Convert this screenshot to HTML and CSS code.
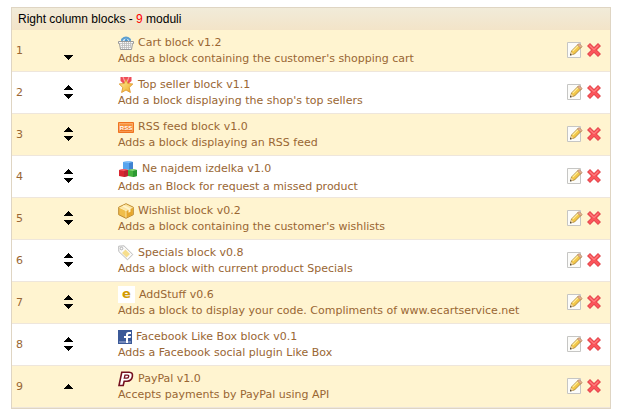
FILE: index.html
```html
<!DOCTYPE html>
<html lang="en">
<head>
<meta charset="utf-8">
<title>Right column blocks</title>
<link rel="stylesheet" href="styles.css">
</head>
<body>
<svg class="defs" width="0" height="0" aria-hidden="true">
  <defs>
    <linearGradient id="gold" x1="0" y1="0" x2="1" y2="1"><stop offset="0" stop-color="#fff0a0"/><stop offset="1" stop-color="#eda820"/></linearGradient>
    <linearGradient id="orange" x1="0" y1="0" x2="0" y2="1"><stop offset="0" stop-color="#f9a04c"/><stop offset="1" stop-color="#ee6c14"/></linearGradient>
    <symbol id="up" viewBox="0 0 9 5"><path d="M4 0h1v1h1v1h1v1h1v1h1v1H0V4h1V3h1V2h1V1h1z"/></symbol>
    <symbol id="down" viewBox="0 0 9 5"><path d="M0 0h9v1H8v1H7v1H6v1H5v1H4V4H3V3H2V2H1V1H0z"/></symbol>
    <symbol id="edit" viewBox="0 0 16 16">
      <path d="M.5 .5h13v15h-13z" fill="#fcfcfa" stroke="#c6c6c4"/>
      <path d="M3.500 13l1-4 7-7 3 3-7 7z" fill="#f3c748" stroke="#a07a2c" stroke-width=".8"/>
      <path d="M5.700 9.200l6-6" stroke="#fff0a0" stroke-width="1.2"/>
      <path d="M10.500 3l1.600-1.600 3 3L13.500 6z" fill="#e6b093" stroke="#a5805c" stroke-width=".6"/>
      <path d="M3.500 13l.8-3.200 2.400 2.400z" fill="#edd2a4"/><path d="M3 13.400l.4-1.800 1.400 1.400z" fill="#333"/>
    </symbol>
    <symbol id="delete" viewBox="0 0 14 14">
      <path d="M3 3l8 8M11 3l-8 8" stroke="#dc3f45" stroke-width="4.2" stroke-linecap="square"/>
      <path d="M3 3l8 8M11 3l-8 8" stroke="#fb555b" stroke-width="2.8" stroke-linecap="square"/>
      <path d="M2.600 2.400l4.400 4.200 4.400-4.200" fill="none" stroke="#ff8e8e" stroke-width="1"/>
    </symbol>
  </defs>
</svg>
<main class="panel">
  <h1 class="panel-title">Right column blocks - <span class="count">9</span> moduli</h1>
  <table class="modules">
    <tbody>
      <tr>
        <td class="position">1</td>
        <td class="order"><div class="arrows arrows-first"><a href="#" aria-label="Move down"><svg width="9" height="5"><use href="#down"/></svg></a></div></td>
        <td class="module">
          <div class="name"><svg width="16" height="16" viewBox="0 0 16 16"><path d="M4 7V4.500Q8 .5 12 4.500V7" fill="#d7e9f6" stroke="#5c9fd0" stroke-width="1.800"/><path d="M6 7l2-4 3 4" fill="#4b95cd"/><path d="M.5 6.500h15v2h-1l-1 6h-11l-1-6h-1z" fill="#f8f8f8" stroke="#999"/><path d="M2 8.500h12M3 10.500h10M3 12.500h10M4.500 7v7M6.500 7v7M8.500 7v7M10.500 7v7M12.500 7v5" stroke="#bbb" stroke-width=".8"/></svg>Cart block v1.2</div>
          <div>Adds a block containing the customer's shopping cart</div>
        </td>
        <td class="actions"><div class="tools"><a href="#" aria-label="Edit"><svg width="16" height="16"><use href="#edit"/></svg></a><a href="#" aria-label="Delete"><svg width="14" height="14"><use href="#delete"/></svg></a></div></td>
      </tr>
      <tr>
        <td class="position">2</td>
        <td class="order"><div class="arrows arrows-pair"><a href="#" aria-label="Move up"><svg width="9" height="5"><use href="#up"/></svg></a><a href="#" aria-label="Move down"><svg width="9" height="5"><use href="#down"/></svg></a></div></td>
        <td class="module">
          <div class="name"><svg width="16" height="16" viewBox="0 0 16 16"><path d="M2.500 0h11v4L10 7H6L2.500 4z" fill="#ee4b57"/><path d="M5 0l2 5M11 0L9 5" stroke="#ffa0a5" stroke-width="1.200"/><path d="M8 2.500l1.800 4 5 .5-3.600 3.500 1.200 5L8 13l-4.400 2.500 1.200-5L1.200 7l5-.5z" fill="url(#gold)" stroke="#df9930" stroke-width=".9"/></svg>Top seller block v1.1</div>
          <div>Add a block displaying the shop's top sellers</div>
        </td>
        <td class="actions"><div class="tools"><a href="#" aria-label="Edit"><svg width="16" height="16"><use href="#edit"/></svg></a><a href="#" aria-label="Delete"><svg width="14" height="14"><use href="#delete"/></svg></a></div></td>
      </tr>
      <tr>
        <td class="position">3</td>
        <td class="order"><div class="arrows arrows-pair"><a href="#" aria-label="Move up"><svg width="9" height="5"><use href="#up"/></svg></a><a href="#" aria-label="Move down"><svg width="9" height="5"><use href="#down"/></svg></a></div></td>
        <td class="module">
          <div class="name"><svg width="16" height="16" viewBox="0 0 16 16"><path d="M.5 3.500h15v10H.5z" fill="url(#orange)" stroke="#ef7320"/><path d="M1.500 4.500h13v8h-13z" fill="none" stroke="#fbb478" stroke-width=".6"/><text class="rss-mark" x="8" y="11" text-anchor="middle">RSS</text></svg>RSS feed block v1.0</div>
          <div>Adds a block displaying an RSS feed</div>
        </td>
        <td class="actions"><div class="tools"><a href="#" aria-label="Edit"><svg width="16" height="16"><use href="#edit"/></svg></a><a href="#" aria-label="Delete"><svg width="14" height="14"><use href="#delete"/></svg></a></div></td>
      </tr>
      <tr>
        <td class="position">4</td>
        <td class="order"><div class="arrows arrows-pair"><a href="#" aria-label="Move up"><svg width="9" height="5"><use href="#up"/></svg></a><a href="#" aria-label="Move down"><svg width="9" height="5"><use href="#down"/></svg></a></div></td>
        <td class="module">
          <div class="name"><svg width="20" height="20" viewBox="0 0 20 20"><path d="M5 3l6-1 4 1v7l-4 1-6-1z" fill="#57a5ee"/><path d="M5 3l6-1 4 1-4 1z" fill="#8ec5f7"/><path d="M11 4l4-1v7l-4 1z" fill="#3f83d2"/><path d="M1 11l5-1 4 1v6l-4 1-5-1z" fill="#d92731"/><path d="M1 11l5-1 4 1-4 1z" fill="#f36a6e"/><path d="M6 12l4-1v6l-4 1z" fill="#bd2631"/><path d="M10 11l5-1 4 1v6l-4 1-5-1z" fill="#45b23d"/><path d="M10 11l5-1 4 1-4 1z" fill="#8bd77c"/><path d="M15 12l4-1v6l-4 1z" fill="#2d9933"/></svg>Ne najdem izdelka v1.0</div>
          <div>Adds an Block for request a missed product</div>
        </td>
        <td class="actions"><div class="tools"><a href="#" aria-label="Edit"><svg width="16" height="16"><use href="#edit"/></svg></a><a href="#" aria-label="Delete"><svg width="14" height="14"><use href="#delete"/></svg></a></div></td>
      </tr>
      <tr>
        <td class="position">5</td>
        <td class="order"><div class="arrows arrows-pair"><a href="#" aria-label="Move up"><svg width="9" height="5"><use href="#up"/></svg></a><a href="#" aria-label="Move down"><svg width="9" height="5"><use href="#down"/></svg></a></div></td>
        <td class="module">
          <div class="name"><svg width="16" height="16" viewBox="0 0 16 16"><path d="M8 .7l7.300 3.500v7.500L8 15.300.7 11.700V4.200z" fill="#f0bd4a" stroke="#bd8a34"/><path d="M8 1.300l6.500 3.200L8 7.700 1.500 4.500z" fill="#fbe5a4"/><path d="M8 7.700l6.600-3.200v7L8 14.700z" fill="#e7a62c"/><path d="M8 7.700v6.800M1.500 4.500L8 7.700l6.500-3.200" fill="none" stroke="#fff1c0" stroke-width=".8"/><path d="M4 3.200l6.500 3.300v3.300l2-1V5.500L6 2.300z" fill="#fff3cc"/></svg>Wishlist block v0.2</div>
          <div>Adds a block containing the customer's wishlists</div>
        </td>
        <td class="actions"><div class="tools"><a href="#" aria-label="Edit"><svg width="16" height="16"><use href="#edit"/></svg></a><a href="#" aria-label="Delete"><svg width="14" height="14"><use href="#delete"/></svg></a></div></td>
      </tr>
      <tr>
        <td class="position">6</td>
        <td class="order"><div class="arrows arrows-pair"><a href="#" aria-label="Move up"><svg width="9" height="5"><use href="#up"/></svg></a><a href="#" aria-label="Move down"><svg width="9" height="5"><use href="#down"/></svg></a></div></td>
        <td class="module">
          <div class="name"><svg width="16" height="16" viewBox="0 0 16 16"><path d="M.7 1.200L6 .8l8.800 8.700-5.300 5.300L.8 6.500z" fill="#fafafa" stroke="#b9b9b9"/><path d="M7.500 4.500l4.500 4.500-3.500 3.500L4 8z" fill="#f6de8e"/><circle cx="3.500" cy="3.500" r="1.300" fill="#fff" stroke="#aaa" stroke-width=".9"/></svg>Specials block v0.8</div>
          <div>Adds a block with current product Specials</div>
        </td>
        <td class="actions"><div class="tools"><a href="#" aria-label="Edit"><svg width="16" height="16"><use href="#edit"/></svg></a><a href="#" aria-label="Delete"><svg width="14" height="14"><use href="#delete"/></svg></a></div></td>
      </tr>
      <tr>
        <td class="position">7</td>
        <td class="order"><div class="arrows arrows-pair"><a href="#" aria-label="Move up"><svg width="9" height="5"><use href="#up"/></svg></a><a href="#" aria-label="Move down"><svg width="9" height="5"><use href="#down"/></svg></a></div></td>
        <td class="module">
          <div class="name"><svg width="17" height="17" viewBox="0 0 17 17"><path d="M0 0h17v17H0z" fill="#fff"/><text class="e-mark" x="8.500" y="12" text-anchor="middle">e</text></svg>AddStuff v0.6</div>
          <div>Adds a block to display your code. Compliments of www.ecartservice.net</div>
        </td>
        <td class="actions"><div class="tools"><a href="#" aria-label="Edit"><svg width="16" height="16"><use href="#edit"/></svg></a><a href="#" aria-label="Delete"><svg width="14" height="14"><use href="#delete"/></svg></a></div></td>
      </tr>
      <tr>
        <td class="position">8</td>
        <td class="order"><div class="arrows arrows-pair"><a href="#" aria-label="Move up"><svg width="9" height="5"><use href="#up"/></svg></a><a href="#" aria-label="Move down"><svg width="9" height="5"><use href="#down"/></svg></a></div></td>
        <td class="module">
          <div class="name"><svg width="14" height="14" viewBox="0 0 14 14"><path d="M0 0h14v14H0z" fill="#3b5998"/><path d="M1 11h12v2H1z" fill="#7389bb"/><path d="M8 13V8H6V6h2V4.500Q8 2 10.500 2H13v2h-1.500Q10 4 10 5v1h3l-.4 2H10v5z" fill="#fff"/></svg>Facebook Like Box block v0.1</div>
          <div>Adds a Facebook social plugin Like Box</div>
        </td>
        <td class="actions"><div class="tools"><a href="#" aria-label="Edit"><svg width="16" height="16"><use href="#edit"/></svg></a><a href="#" aria-label="Delete"><svg width="14" height="14"><use href="#delete"/></svg></a></div></td>
      </tr>
      <tr>
        <td class="position">9</td>
        <td class="order"><div class="arrows"><a href="#" aria-label="Move up"><svg width="9" height="5"><use href="#up"/></svg></a></div></td>
        <td class="module">
          <div class="name"><svg width="16" height="16" viewBox="0 0 16 16"><path d="M3.800 1.200h7.400q3.800.2 3.200 4.200-.8 4.800-5.400 4.800H6.200l-1 4.300H1z" fill="#fff" stroke="#74101f" stroke-width="1.600"/><path d="M7 4.200h2.500q1.500 0 1.200 1.300-.4 1.700-2 1.700H6.300z" fill="#fff" stroke="#74101f" stroke-width="1.300"/></svg>PayPal v1.0</div>
          <div>Accepts payments by PayPal using API</div>
        </td>
        <td class="actions"><div class="tools"><a href="#" aria-label="Edit"><svg width="16" height="16"><use href="#edit"/></svg></a><a href="#" aria-label="Delete"><svg width="14" height="14"><use href="#delete"/></svg></a></div></td>
      </tr>
    </tbody>
  </table>
</main>
</body>
</html>
```
FILE: styles.css
```css
body {
  margin: 7px 15px 8px 11px;
  background: #fff;
  color: #996633;
  font: 11px/16px "DejaVu Sans", sans-serif;
}

.defs {
  position: absolute;
}

.panel {
  border: 1px solid #dfd5c3;
}

.panel-title {
  margin: 0;
  padding: 3px 6px;
  background: linear-gradient(#f1ebd9, #f3e4c8);
  color: #000;
  font: 12px/16px "Liberation Sans", sans-serif;
}

.count {
  color: #f00;
}

.modules {
  width: 100%;
  border-collapse: separate;
  border-spacing: 0;
}

.modules td {
  height: 41px;
  padding: 0;
  border-bottom: 1px solid #eee6dc;
  vertical-align: middle;
}

.modules tr:nth-child(odd) {
  background: #fff4d0;
}

.modules .position {
  width: 32px;
  padding-left: 4px;
}

.modules .order {
  width: 41px;
}

.modules .module {
  padding-left: 29px;
}

.modules .actions {
  width: 43px;
}

.modules svg {
  display: block;
  flex: none;
}

.arrows {
  display: flex;
  flex-direction: column;
  align-items: center;
  gap: 4px;
}

.arrows-first {
  padding-top: 14px;
}

.arrows-pair {
  padding-bottom: 2px;
}

.name {
  display: flex;
  align-items: center;
  gap: 4px;
}

.tools {
  display: flex;
  align-items: center;
  gap: 4px;
  padding-bottom: 2px;
}

.rss-mark {
  fill: #fff;
  font: bold 6px "Liberation Sans", sans-serif;
}

.e-mark {
  fill: #d29a00;
  font: bold 13px "DejaVu Sans", sans-serif;
}
```
